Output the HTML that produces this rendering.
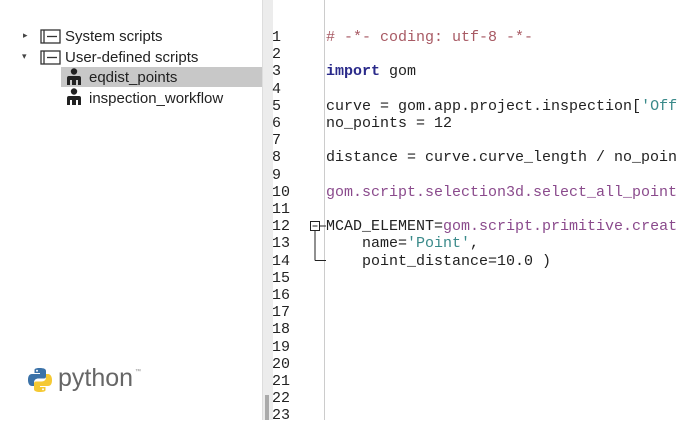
<!DOCTYPE html><html><head><style>
body{margin:0;width:680px;height:420px;overflow:hidden;background:#fff;position:relative;font-family:"Liberation Sans",sans-serif}
.t{position:absolute;font-size:15px;color:#222;white-space:nowrap}
.split{position:absolute;left:262px;top:0;width:10px;height:420px;background:#ececec;border-left:1px solid #ddd}
.gb{position:absolute;left:324px;top:0;width:1px;height:420px;background:#ccc}
pre{margin:0;position:absolute;font-family:"Liberation Mono",monospace;font-size:15px;line-height:17.2px;color:#222}
.c{color:#a85a64}.k{color:#2a2a8a;font-weight:bold}.p{color:#8a4a8c}.s{color:#3a8a8a}
</style></head><body>
<div style="position:absolute;left:61px;top:67px;width:201px;height:20px;background:#c8c8c8"></div>
<div class="t" style="left:23px;top:30px;font-size:9px;color:#444">▸</div>
<div class="t" style="left:22px;top:51px;font-size:9px;color:#444">▾</div>
<svg style="position:absolute;left:40px;top:29px" width="22" height="38"><g fill="none" stroke="#333" stroke-width="1.3"><rect x="1" y="1" width="19" height="13"/><line x1="4" y1="1" x2="4" y2="14"/><line x1="7" y1="7.5" x2="17" y2="7.5"/><rect x="1" y="22" width="19" height="13"/><line x1="4" y1="22" x2="4" y2="35"/><line x1="7" y1="28.5" x2="17" y2="28.5"/></g></svg>
<div class="t" style="left:65px;top:28px">System scripts</div>
<div class="t" style="left:65px;top:49px">User-defined scripts</div>
<svg style="position:absolute;left:66px;top:68px" width="18" height="40"><g fill="#222"><circle cx="8" cy="3.5" r="3.2"/><path d="M1 17V10Q1 8 3 8H13Q15 8 15 10V17H12V12H10V17H6V12H4V17Z"/><circle cx="8" cy="23.5" r="3.2"/><path d="M1 37V30Q1 28 3 28H13Q15 28 15 30V37H12V32H10V37H6V32H4V37Z"/></g></svg>
<div class="t" style="left:89px;top:69px">eqdist_points</div>
<div class="t" style="left:89px;top:90px">inspection_workflow</div>
<svg style="position:absolute;left:27px;top:367px" width="26" height="26" viewBox="0 0 26 26"><path d="M12.5 1C7 1 7.5 3 7.5 3V6H13V7H5C2 7 1 9.5 1 13S2.5 19 5 19H7V15.5C7 13 9 11.5 11.5 11.5H17C19 11.5 19 10 19 8.5V4C19 2 17 1 12.5 1Z" fill="#3b72a8"/><path d="M13.5 25C19 25 18.5 23 18.5 23V20H13V19H21C24 19 25 16.5 25 13S23.5 7 21 7H19V10.5C19 13 17 14.5 14.5 14.5H9C7 14.5 7 16 7 17.5V22C7 24 9 25 13.5 25Z" fill="#f5c933"/><circle cx="10" cy="3.8" r="1" fill="#fff"/><circle cx="16" cy="22.2" r="1" fill="#fff"/></svg>
<div class="t" style="left:58px;top:364px;font-size:25px;color:#666">python</div>
<div class="t" style="left:135px;top:369px;font-size:6px;color:#888">™</div>
<div class="split"></div>
<div style="position:absolute;left:265px;top:395px;width:4px;height:25px;background:#aaa"></div>
<div class="gb"></div>
<pre style="left:272px;top:29px">1
2
3
4
5
6
7
8
9
10
11
12
13
14
15
16
17
18
19
20
21
22
23</pre>
<svg style="position:absolute;left:308px;top:219px" width="18" height="45"><g fill="none" stroke="#222" stroke-width="1"><rect x="2.5" y="2.5" width="9" height="9"/><line x1="4.5" y1="7" x2="9.5" y2="7"/><line x1="11.5" y1="7" x2="18" y2="7"/><line x1="7" y1="11.5" x2="7" y2="41.5"/><line x1="7" y1="41.5" x2="18" y2="41.5"/></g></svg>
<pre style="left:326px;top:29px"><span class="c"># -*- coding: utf-8 -*-</span>

<span class="k">import</span> gom

curve = gom.app.project.inspection[<span class="s">'Off</span>
no_points = 12

distance = curve.curve_length / no_poin

<span class="p">gom.script.selection3d.select_all_point</span>

MCAD_ELEMENT=<span class="p">gom.script.primitive.creat</span>
    name=<span class="s">'Point'</span>,
    point_distance=10.0 )</pre>
</body></html>
